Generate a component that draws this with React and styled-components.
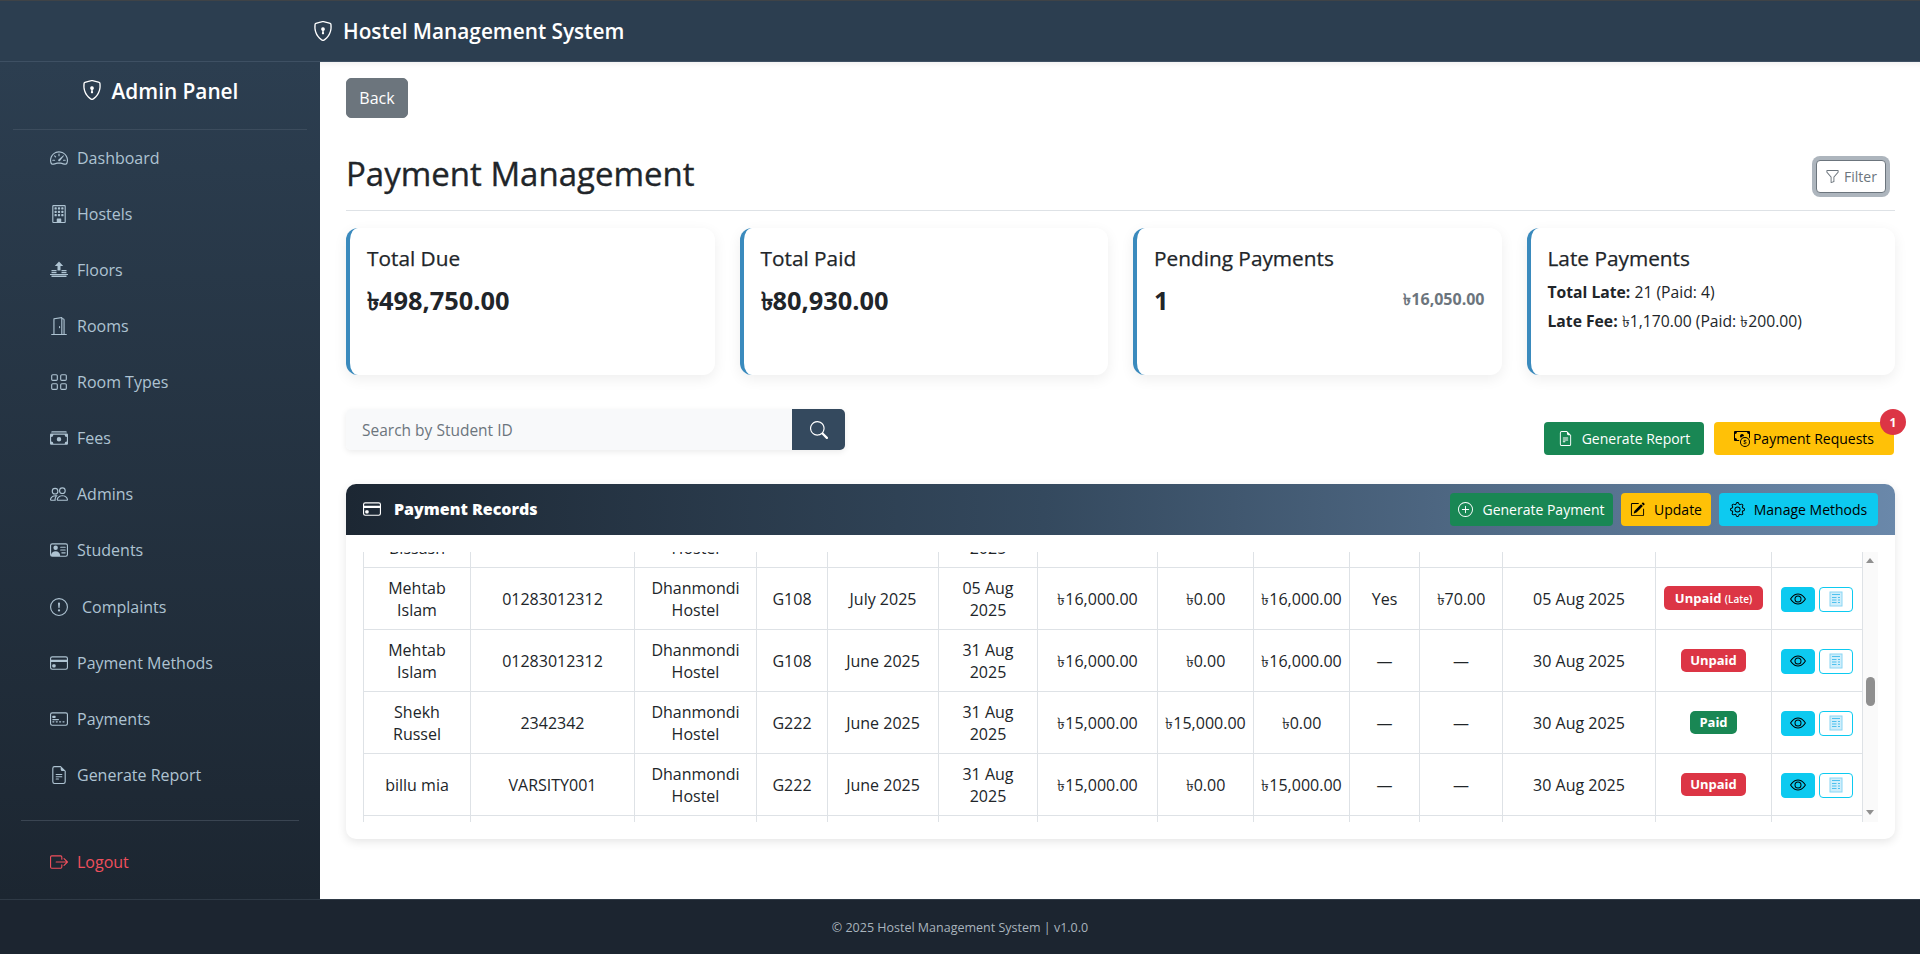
import React, { useLayoutEffect, useRef } from "react";
import styled, { createGlobalStyle, css } from "styled-components";
import {
  BsShieldLock, BsSpeedometer2, BsBuilding, BsDoorOpen, BsGrid, BsCashStack, BsPeople,
  BsPersonVcard, BsExclamationCircle, BsCreditCard, BsCreditCard2Front, BsFileEarmarkText,
  BsBoxArrowRight, BsFunnel, BsSearch, BsCashCoin, BsPlusCircle, BsPencilSquare, BsGear, BsEye,
} from "react-icons/bs";

const Global = createGlobalStyle`
  * { box-sizing: border-box; }
  html, body { margin: 0; height: 100%; }
  body { font-family: "Open Sans", "Noto Sans", "DejaVu Sans", sans-serif; color: #212529; background: #fff; overflow: hidden; }
`;

const Page = styled.div`height: 954px; display: flex; flex-direction: column;`;
const TopBar = styled.header`
  height: 62px; flex: none; background: #2c3e50; border-top: 1px solid #3f4347; border-bottom: 1px solid #3e5063;
  display: flex; align-items: center; padding-left: 313px; gap: 10px; color: #fff;
  font-size: 20.8px; font-weight: 600;
`;
const Body = styled.div`flex: 1; display: flex; min-height: 0;`;
const Sidebar = styled.aside`
  width: 320px; flex: none; display: flex; flex-direction: column;
  background: linear-gradient(180deg, #2c3e50 0%, #1c2631 100%);
`;
const SideBrand = styled.div`
  height: 68px; margin: 0 13px; border-bottom: 1px solid #3c4c5d; color: #fff;
  display: flex; justify-content: center; align-items: flex-start; gap: 10px; padding-top: 14px;
  font-size: 20.8px; font-weight: 600; line-height: 31px;
  svg { margin-top: 4px; }
`;
const Nav = styled.nav`display: flex; flex-direction: column;`;
const NavItem = styled.a`
  height: ${(p) => (p.$wide ? "57px" : "56px")}; display: flex; align-items: center; gap: ${(p) => (p.$wide ? "14px" : "9px")}; padding-left: 50px;
  font-size: 16px; color: ${(p) => (p.$danger ? "#ef4f5c" : "#aec3d2")};
  svg { width: 18px; height: 18px; flex: none; }
`;
const SideFoot = styled.div`margin: 17px 21px 0; border-top: 1px solid #3a4552; padding-top: 13px;`;
const LogoutItem = styled(NavItem)`padding-left: 29px;`;

const Main = styled.main`
  flex: 1; min-width: 0; padding: 16px 25px 0 26px; box-shadow: inset 0 8px 8px -8px rgba(0,0,0,.1);
`;
const BackButton = styled.button`
  display: block; width: 62px; height: 40px; background: #6c757d; color: #fff; border: 1px solid #6c757d;
  border-radius: 5px; font: inherit; font-size: 16px;
`;
const TitleRow = styled.div`
  height: 93px; display: flex; justify-content: space-between; align-items: center;
  border-bottom: 1px solid #dee2e6; padding: 19px 5px 0 0;
`;
const Title = styled.h1`margin: 0; font-size: 33px; font-weight: 400; -webkit-text-stroke: 0.35px #212529; line-height: 48px; color: #212529;`;
const FilterButton = styled.button`
  width: 70px; height: 33px; margin: 5px 4px 0 0; display: flex; align-items: center; justify-content: center; gap: 4px; padding: 0;
  background: #fff; border: 1px solid #6c757d; border-radius: 4px; color: #6c757d; font: inherit; font-size: 14px;
  box-shadow: 0 0 0 4px #adb5bd;
`;
const Cards = styled.section`display: grid; grid-template-columns: repeat(4, 1fr); gap: 25px; margin-top: 17px;`;
const Card = styled.article`
  height: 147px; background: #fff; border-left: 4px solid #3a8abd; border-radius: 12px;
  box-shadow: 0 4px 14px rgba(0,0,0,.07); padding: 15px 17px 0 17px;
`;
const CardTitle = styled.h5`margin: 0 0 9px; font-size: 20.8px; font-weight: 400; -webkit-text-stroke: 0.25px #212529; line-height: 30px;`;
const CardValue = styled.div`font-size: 25.4px; font-weight: 700; line-height: 36px;`;
const SplitRow = styled.div`display: flex; justify-content: space-between; align-items: center;`;
const Muted = styled.span`color: #6c757d; font-weight: 700; font-size: 16px;`;
const Line = styled.p`margin: 0 0 7px; font-size: 15.7px; line-height: 22px; &:first-of-type { margin-top: -1px; }`;

const ToolRow = styled.section`display: flex; justify-content: space-between; margin-top: 34px; height: 46px;`;
const SearchBox = styled.div`
  width: 499px; height: 41px; display: flex; border-radius: 5px; overflow: hidden;
  box-shadow: 0 2px 6px rgba(0,0,0,.08);
`;
const SearchInput = styled.input`
  flex: 1; min-width: 0; border: 0; background: #f8f9fa; padding: 0 16px; font: inherit; font-size: 15.5px;
  &::placeholder { color: #6c757d; opacity: 1; }
`;
const SearchButton = styled.button`
  width: 53px; border: 0; background: #34495e; color: #fff; display: flex; align-items: center; justify-content: center;
`;
const ToolButtons = styled.div`display: flex; gap: 10px; align-items: flex-end; padding-right: 1px;`;

const tones = {
  green: css`background: #198754; color: #fff;`,
  amber: css`background: #ffc107; color: #000;`,
  cyan: css`background: #0dcaf0; color: #000;`,
};
const Btn = styled.button`
  position: relative; height: 33px; width: ${(p) => p.$w}px; border: 0; border-radius: 4px; padding: 0;
  display: flex; align-items: center; justify-content: center; gap: ${(p) => p.$gap ?? 9}px;
  font: inherit; font-size: 14px; ${(p) => tones[p.$tone]}
`;
const CountBadge = styled.span`
  position: absolute; top: -13px; right: -12px; width: 26px; height: 26px; border-radius: 50%;
  background: #dc3545; color: #fff; font-size: 12px; font-weight: 700; display: flex; align-items: center; justify-content: center;
`;

const Panel = styled.section`
  margin-top: 29px; border-radius: 10px; background: #fff; box-shadow: 0 3px 10px rgba(0,0,0,.1); overflow: hidden;
`;
const PanelHead = styled.div`
  height: 51px; display: flex; align-items: center; justify-content: space-between; padding: 0 17px;
  background: linear-gradient(90deg, #1c2733 0%, #34495e 45%, #6a88aa 100%); color: #fff;
`;
const PanelTitle = styled.h5`
  margin: 0; padding-bottom: 2px; display: flex; align-items: center; gap: 13px; font-size: 16px; font-weight: 800; line-height: 24px;
`;
const PanelActions = styled.div`display: flex; gap: 8px;`;
const PanelBody = styled.div`padding: 17px;`;
const ScrollArea = styled.div`position: relative;`;
const Scroller = styled.div`
  height: 270px; overflow: hidden;
`;
const Track = styled.div`position: absolute; top: 0; right: 0; bottom: 0; width: 15px; background: #fafafa;`;
const Thumb = styled.div`position: absolute; left: 3px; top: 125px; width: 9px; height: 29px; border-radius: 5px; background: #8f8f8f;`;
const ArrowUp = styled.div`
  position: absolute; left: 3px; top: 6px; width: 0; height: 0;
  border-left: 4.5px solid transparent; border-right: 4.5px solid transparent; border-bottom: 5px solid #909090;
`;
const ArrowDown = styled.div`
  position: absolute; left: 3px; bottom: 7px; width: 0; height: 0;
  border-left: 4.5px solid transparent; border-right: 4.5px solid transparent; border-top: 5px solid #909090;
`;
const Table = styled.table`width: 1499px; table-layout: fixed; border-collapse: collapse; font-size: 16px; line-height: 22px;`;
const Th = styled.th`border: 1px solid #dee2e6; padding: 8px; text-align: center; font-weight: 600;`;
const Td = styled.td`border: 1px solid #dee2e6; padding: 8px; height: 62px; text-align: center; vertical-align: middle; color: #212529;`;
const NarrowTd = styled(Td)`padding: 8px 2px;`;
const Status = styled.span`
  display: inline-block; height: 23px; padding: 0 ${(p) => (p.$late ? 11 : 9)}px; border-radius: 5px; color: #fff;
  font-size: 13px; font-weight: 700; line-height: 23px; margin-top: -3px; vertical-align: middle;
  background: ${(p) => (p.$paid ? "#198754" : "#dc3545")};
  ${(p) => p.$late && "height: 24px; line-height: 24px;"}
  small { font-size: 10px; font-weight: 600; }
`;
const ActionGroup = styled.div`display: flex; justify-content: center; gap: 4px; margin-top: 1px;`;
const EyeBtn = styled.button`
  width: 34px; height: 25px; padding: 0; border: 1px solid #0dcaf0; background: #0dcaf0; border-radius: 4px; color: #000;
  display: flex; align-items: center; justify-content: center;
`;
const DocBtn = styled(EyeBtn)`background: #fff;`;

const FloorsIcon = () => (
  <svg viewBox="0 0 18 18" fill="currentColor">
    <path d="M9 .5 4.8 5h2.700v4.500h3V5h2.700z" />
    <path d="M1.500 9h5v1.300h-5zM11.500 9h5v1.300h-5zM1.500 11h5v1.300h-5zM11.500 11h5v1.300h-5zM0 13h18v1H0zM1.500 14.500h15v1.500h-15z" />
  </svg>
);
const DocIcon = () => (
  <svg width="14" height="16" viewBox="0 0 14 16">
    <rect x="1" y="1" width="12" height="14" fill="#cfeefb" stroke="#8ad6f4" />
    <path d="M3 3.500h8M3 6.500h4.500M3 9h4.500M3 11.500h4.500M9 6.500h2M9 9h2M9 11.500h2" stroke="#4fc1ee" />
  </svg>
);

const navItems = [
  [BsSpeedometer2, "Dashboard"], [BsBuilding, "Hostels"], [FloorsIcon, "Floors"], [BsDoorOpen, "Rooms"],
  [BsGrid, "Room Types"], [BsCashStack, "Fees"], [BsPeople, "Admins"], [BsPersonVcard, "Students"],
  [BsExclamationCircle, "Complaints", true], [BsCreditCard, "Payment Methods"], [BsCreditCard2Front, "Payments"], [BsFileEarmarkText, "Generate Report"],
];

const rows = [
  ["Rakib Bissash", "01712345678", "Dhanmondi Hostel", "G108", "July 2025", "05 Aug 2025", "৳16,000.00", "৳0.00", "৳16,000.00", "Yes", "৳70.00", "05 Aug 2025", "late"],
  ["Mehtab Islam", "01283012312", "Dhanmondi Hostel", "G108", "July 2025", "05 Aug 2025", "৳16,000.00", "৳0.00", "৳16,000.00", "Yes", "৳70.00", "05 Aug 2025", "late"],
  ["Mehtab Islam", "01283012312", "Dhanmondi Hostel", "G108", "June 2025", "31 Aug 2025", "৳16,000.00", "৳0.00", "৳16,000.00", "—", "—", "30 Aug 2025", "unpaid"],
  ["Shekh Russel", "2342342", "Dhanmondi Hostel", "G222", "June 2025", "31 Aug 2025", "৳15,000.00", "৳15,000.00", "৳0.00", "—", "—", "30 Aug 2025", "paid"],
  ["billu mia", "VARSITY001", "Dhanmondi Hostel", "G222", "June 2025", "31 Aug 2025", "৳15,000.00", "৳0.00", "৳15,000.00", "—", "—", "30 Aug 2025", "unpaid"],
  ["Mehtab Islam", "01283012312", "Dhanmondi Hostel", "G108", "May 2025", "31 Aug 2025", "৳16,000.00", "৳0.00", "৳16,000.00", "—", "—", "30 Aug 2025", "unpaid"],
];
const anchorIndex = 1;
const widths = [107, 164, 122, 71, 111, 99, 120, 96, 96, 70, 83, 153, 116, 91];
const heads = ["Student", "Student ID", "Hostel", "Room", "Month", "Due Date", "Amount", "Paid", "Due", "Late", "Late Fee", "Payment Date", "Status", "Actions"];

const StatusCell = ({ kind }) => {
  if (kind === "paid") return <Status $paid>Paid</Status>;
  if (kind === "late") return <Status $late>Unpaid <small>(Late)</small></Status>;
  return <Status>Unpaid</Status>;
};

const Footer = styled.footer`
  height: 55px; flex: none; background: #1c2530; border-top: 1px solid #2f3a46; color: #a9b4bd;
  display: flex; align-items: center; justify-content: center; font-size: 12.5px;
`;

export default function App() {
  const scroller = useRef(null);
  const anchor = useRef(null);
  useLayoutEffect(() => {
    scroller.current.scrollTop = anchor.current.offsetTop - 15;
  }, []);
  return (
    <Page>
      <Global />
      <TopBar><BsShieldLock size={20} />Hostel Management System</TopBar>
      <Body>
        <Sidebar>
          <SideBrand><BsShieldLock size={20} />Admin Panel</SideBrand>
          <Nav>
            {navItems.map(([Icon, label, wide]) => (
              <NavItem key={label} $wide={wide}><Icon />{label}</NavItem>
            ))}
          </Nav>
          <SideFoot>
            <LogoutItem $danger><BsBoxArrowRight />Logout</LogoutItem>
          </SideFoot>
        </Sidebar>
        <Main>
          <BackButton>Back</BackButton>
          <TitleRow>
            <Title>Payment Management</Title>
            <FilterButton><BsFunnel size={15} />Filter</FilterButton>
          </TitleRow>
          <Cards>
            <Card><CardTitle>Total Due</CardTitle><CardValue>৳498,750.00</CardValue></Card>
            <Card><CardTitle>Total Paid</CardTitle><CardValue>৳80,930.00</CardValue></Card>
            <Card>
              <CardTitle>Pending Payments</CardTitle>
              <SplitRow><CardValue>1</CardValue><Muted>৳16,050.00</Muted></SplitRow>
            </Card>
            <Card>
              <CardTitle>Late Payments</CardTitle>
              <Line><strong>Total Late:</strong> 21 (Paid: 4)</Line>
              <Line><strong>Late Fee:</strong> ৳1,170.00 (Paid: ৳200.00)</Line>
            </Card>
          </Cards>
          <ToolRow>
            <SearchBox>
              <SearchInput placeholder="Search by Student ID" />
              <SearchButton><BsSearch size={18} /></SearchButton>
            </SearchBox>
            <ToolButtons>
              <Btn $tone="green" $w={160}><BsFileEarmarkText size={15} />Generate Report</Btn>
              <Btn $tone="amber" $w={180} $gap={3}><BsCashCoin size={16} />Payment Requests<CountBadge>1</CountBadge></Btn>
            </ToolButtons>
          </ToolRow>
          <Panel>
            <PanelHead>
              <PanelTitle><BsCreditCard size={18} />Payment Records</PanelTitle>
              <PanelActions>
                <Btn $tone="green" $w={163}><BsPlusCircle size={15} />Generate Payment</Btn>
                <Btn $tone="amber" $w={90}><BsPencilSquare size={15} />Update</Btn>
                <Btn $tone="cyan" $w={159}><BsGear size={15} />Manage Methods</Btn>
              </PanelActions>
            </PanelHead>
            <PanelBody>
              <ScrollArea>
                <Scroller ref={scroller}>
                  <Table>
                    <colgroup>{widths.map((w, i) => <col key={i} width={w} />)}</colgroup>
                    <thead><tr>{heads.map((h) => <Th key={h}>{h}</Th>)}</tr></thead>
                    <tbody>
                      {rows.map((r, i) => (
                        <tr key={i} ref={i === anchorIndex ? anchor : undefined}>
                          {r.slice(0, 12).map((c, j) => (
                            j >= 6 && j <= 8 ? <NarrowTd key={j}>{c}</NarrowTd> : <Td key={j}>{c}</Td>
                          ))}
                          <NarrowTd><StatusCell kind={r[12]} /></NarrowTd>
                          <NarrowTd>
                            <ActionGroup>
                              <EyeBtn><BsEye size={16} /></EyeBtn>
                              <DocBtn><DocIcon /></DocBtn>
                            </ActionGroup>
                          </NarrowTd>
                        </tr>
                      ))}
                    </tbody>
                  </Table>
                </Scroller>
                <Track><ArrowUp /><Thumb /><ArrowDown /></Track>
              </ScrollArea>
            </PanelBody>
          </Panel>
        </Main>
      </Body>
      <Footer>© 2025 Hostel Management System | v1.0.0</Footer>
    </Page>
  );
}
